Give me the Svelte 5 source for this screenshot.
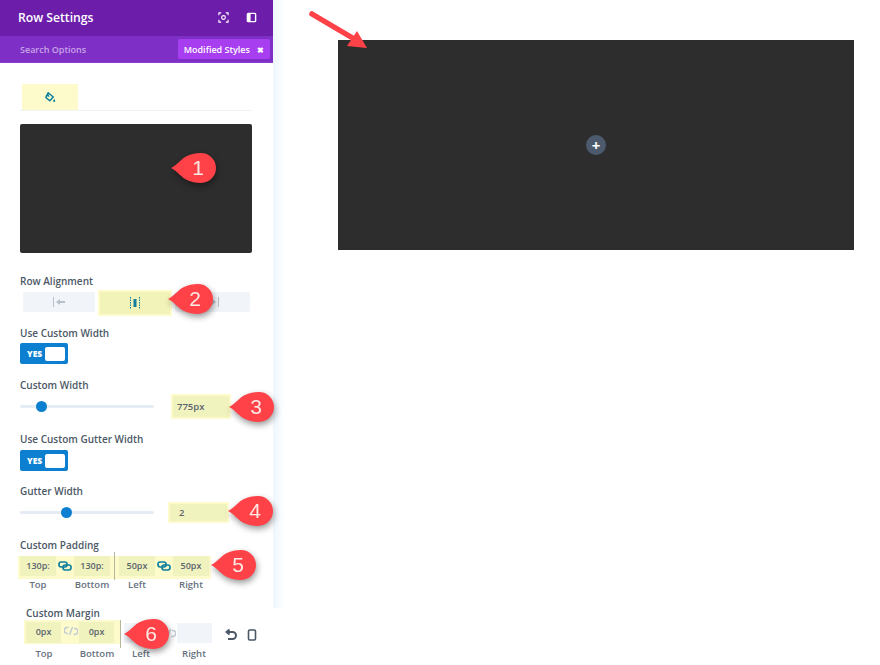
<script>
	const callouts = [
		{ n: 1, x: 171, y: 168 },
		{ n: 2, x: 168, y: 299 },
		{ n: 3, x: 229, y: 407 },
		{ n: 4, x: 228, y: 511 },
		{ n: 5, x: 211, y: 565 },
		{ n: 6, x: 124, y: 634 }
	];
</script>

{#snippet link()}
	<svg class="link" viewBox="0 0 14 10" width="14" height="10" fill="none" stroke="#0f7f9d" stroke-width="1.7">
		<rect x="1" y="1" width="8" height="5" rx="2.2" />
		<rect x="5" y="4" width="8" height="5" rx="2.2" />
	</svg>
{/snippet}

{#snippet broken()}
	<svg class="link" viewBox="0 0 14 10" width="14" height="10" fill="none" stroke="#c3ccd6" stroke-width="1.5">
		<path d="M4.500 1.500H3.200a2.500 2.500 0 0 0 0 6h.8" />
		<path d="M9.500 8.500h1.300a2.500 2.500 0 0 0 0-6H10" />
		<path d="M8.500 1 5.500 9" />
	</svg>
{/snippet}

<div class="page">
	<div class="side">
		<div class="panel">
			<header class="title">
				<h1>Row Settings</h1>
				<svg viewBox="0 0 12 12" width="11" height="11" fill="none" stroke="#fff" stroke-width="1.2">
					<path d="M1 3.500V1h2.500M8.500 1H11v2.500M11 8.500V11H8.500M3.500 11H1V8.500" />
					<circle cx="6" cy="6" r="2" />
				</svg>
				<svg viewBox="0 0 12 12" width="11" height="11" fill="none" stroke="#fff" stroke-width="1.500">
					<rect x="1.500" y="1.500" width="9" height="9" rx="1" />
					<path d="M2 2h3v8H2z" fill="#fff" stroke="none" />
				</svg>
			</header>
			<div class="search">
				<span>Search Options</span>
				<button class="modified">Modified Styles <b>✖</b></button>
			</div>

			<div class="body">
				<div class="tabs">
					<div class="tab">
						<svg viewBox="0 0 12 12" width="11" height="11" fill="#0f7f9d">
							<path d="M3.500 .8 9 5.500 5.200 9.600 1 6 1.800 3.500 3.600 4.200 2.800 2z" fill="none" stroke="#0f7f9d" stroke-width="1.600" />
							<path d="M10 7.500c.8 1 1.200 1.700 1.200 2.300a1.100 1.100 0 0 1-2.300 0c0-.6.400-1.300 1.100-2.300z" />
						</svg>
					</div>
				</div>
				<div class="preview"></div>

				<div class="label first">Row Alignment</div>
				<div class="align">
					<div class="opt left">
						<svg viewBox="0 0 14 10" width="14" height="10" fill="#b5c0cc">
							<path d="M1 0h1v10H1zM4 5l4-3v2h5v2H8v2z" />
						</svg>
					</div>
					<div class="opt on">
						<svg viewBox="0 0 14 12" width="14" height="12">
							<path d="M2.500 0v12M11.500 0v12" stroke="#0f7f9d" stroke-dasharray="1.500 1" fill="none" />
							<rect x="5.500" y="2" width="3" height="8" fill="#0f7f9d" />
						</svg>
					</div>
					<div class="opt">
						<svg viewBox="0 0 14 10" width="14" height="10" fill="#b5c0cc">
							<path d="M12 0h1v10h-1zM10 5 6 2v2H1v2h5v2z" />
						</svg>
					</div>
				</div>

				<div class="label">Use Custom Width</div>
				<div class="toggle"><span>YES</span><i></i></div>

				<div class="label wide first-wide">Custom Width</div>
				<div class="range">
					<div class="track"><i style="left: 12.300%"></i></div>
					<div class="value width">775px</div>
				</div>

				<div class="label wide">Use Custom Gutter Width</div>
				<div class="toggle low"><span>YES</span><i></i></div>

				<div class="label wide">Gutter Width</div>
				<div class="range two">
					<div class="track"><i style="left: 30.600%"></i></div>
					<div class="value">2</div>
				</div>

				<div class="label pad">Custom Padding</div>
				<div class="band">
					<div class="box">130p:</div>
					{@render link()}
					<div class="box">130p:</div>
					<div class="rule"></div>
					<div class="box">50px</div>
					{@render link()}
					<div class="box">50px</div>
				</div>
				<div class="caps">
					<span>Top</span><span>Bottom</span><span class="near">Left</span><span>Right</span>
				</div>
			</div>
		</div>

		<div class="foot">
			<div class="label">Custom Margin</div>
			<div class="margin">
				<div class="band">
					<div class="box">0px</div>
					{@render broken()}
					<div class="box">0px</div>
				</div>
				<div class="rule"></div>
				<div class="box blank"></div>
				{@render broken()}
				<div class="box blank"></div>
				<svg class="undo" viewBox="0 0 12 12" width="12" height="12" fill="none" stroke="#4c5866" stroke-width="2">
					<path d="M3 3h4.500a3.200 3.200 0 0 1 0 7H3" />
					<path d="M4.500 .5 1.500 3l3 2.500" />
				</svg>
				<svg class="phone" viewBox="0 0 10 12" width="10" height="12" fill="none" stroke="#4c5866" stroke-width="1.600">
					<rect x="1.500" y="1" width="7" height="10" rx="1.200" />
				</svg>
			</div>
			<div class="caps">
				<span>Top</span><span>Bottom</span><span class="near">Left</span><span>Right</span>
			</div>
		</div>
	</div>

	<div class="edge"></div>

	<main class="canvas">
		<div class="row"><div class="plus">+</div></div>
	</main>

	<svg class="arrow" viewBox="0 0 70 50" width="70" height="50">
		<path d="M3 3 47 29" stroke="#ff4148" stroke-width="5.500" stroke-linecap="round" />
		<path d="M58 37 38 35 48 20z" fill="#ff4148" />
	</svg>

	{#each callouts as c}
		<div class="callout" style="left: {c.x}px; top: {c.y - 16}px">
			<svg viewBox="0 0 46 32" width="46" height="32">
				<path d="M0 16C6 13 11 6 16 4 20 2 25 1 30 1a15 15 0 0 1 0 30c-5 0-10-1-14-3C11 26 6 19 0 16z" fill="#ff4148" />
			</svg>
			<span>{c.n}</span>
		</div>
	{/each}
</div>

<style>
	:global(body) {
		margin: 0;
		background: #fff;
	}
	.page {
		position: relative;
		display: flex;
		width: 880px;
		height: 665px;
		overflow: hidden;
		font-family: 'Open Sans', sans-serif;
		color: #4c5866;
	}
	.side {
		flex: none;
		width: 273px;
	}
	.panel {
		height: 606px;
	}
	.title {
		display: flex;
		align-items: center;
		gap: 17px;
		height: 36px;
		padding: 0 16px 2px 18px;
		background: #6c1eab;
		box-sizing: border-box;
	}
	h1 {
		flex: 1;
		margin: 0;
		font-size: 12.200px;
		font-weight: 600;
		color: #fff;
	}
	.search {
		display: flex;
		align-items: center;
		justify-content: space-between;
		height: 26px;
		padding: 0 3px 0 20px;
		background: #7e30c6;
		border-bottom: 1px solid #8a3bd0;
		font-size: 9px;
		font-weight: 600;
		color: #c9a3e8;
	}
	.modified {
		width: 92px;
		height: 20px;
		padding: 0;
		border: 0;
		border-radius: 2px;
		background: #a73ef0;
		font: 600 9px 'Open Sans', sans-serif;
		color: #fff;
	}
	.modified b {
		margin-left: 5px;
		font-size: 8px;
	}
	.body {
		padding: 21px 21px 0 20px;
	}
	.tabs {
		height: 26px;
		border-bottom: 1px solid #f0f3f7;
	}
	.tab {
		display: flex;
		align-items: center;
		justify-content: center;
		width: 56px;
		height: 26px;
		margin-left: 2px;
		background: #fdfbcb;
	}
	.preview {
		height: 129px;
		margin-top: 13px;
		border-radius: 2px;
		background: #2d2d2d;
	}
	.label {
		height: 15px;
		font-size: 10px;
		font-weight: 600;
		line-height: 15px;
	}
	.label.first {
		margin-top: 21px;
	}
	.align {
		display: flex;
		align-items: flex-start;
		gap: 3px;
		height: 26px;
		margin: 1px 2px 10px 3px;
	}
	.opt {
		display: flex;
		flex: 1;
		align-items: center;
		justify-content: center;
		height: 20px;
		margin-top: 2px;
		border-radius: 2px;
		background: #f1f4f8;
	}
	.opt.left {
		flex: none;
		width: 72px;
	}
	.opt.on {
		flex: none;
		box-sizing: border-box;
		width: 74px;
		height: 26px;
		margin-top: 0;
		border: 2px solid #fdfbcb;
		border-radius: 0;
		background: #f1f3b8;
	}
	.toggle {
		display: flex;
		align-items: center;
		justify-content: space-between;
		box-sizing: border-box;
		width: 48px;
		height: 21px;
		margin-top: 2px;
		padding: 0 3px 0 7px;
		border-radius: 2px;
		background: #0c7fd1;
		font-size: 8.500px;
		font-weight: 800;
		color: #fff;
	}
	.toggle.low {
		margin-top: 3px;
	}
	.toggle i {
		width: 20px;
		height: 14px;
		border-radius: 2px;
		background: #fff;
	}
	.label.wide {
		margin-top: 13px;
	}
	.label.first-wide {
		margin-top: 14px;
	}
	.range {
		display: flex;
		align-items: center;
		justify-content: space-between;
		height: 25px;
		margin-top: 1px;
	}
	.range.two {
		height: 21px;
		margin-top: 3px;
	}
	.track {
		position: relative;
		width: 134px;
		height: 3px;
		border-radius: 2px;
		background: #e6ecf3;
	}
	.track i {
		position: absolute;
		top: -4px;
		width: 11px;
		height: 11px;
		border-radius: 50%;
		background: #0c7fd1;
	}
	.value {
		box-sizing: border-box;
		width: 61px;
		height: 100%;
		padding-left: 9px;
		margin-right: 23px;
		border: 2px solid #fdfbcb;
		background: #f1f3be;
		font-size: 9.500px;
		font-weight: 600;
		line-height: 17px;
		color: #5c6470;
	}
	.value.width {
		width: 60px;
		margin-right: 21px;
		padding-left: 4px;
		line-height: 21px;
	}
	.label.pad {
		margin-top: 15px;
	}
	.band {
		display: flex;
		align-items: flex-start;
		width: fit-content;
		height: 23px;
		margin: 3px 0 0 -2px;
		padding: 0 2px;
		background: #fdfbcb;
	}
	.box {
		flex: none;
		box-sizing: border-box;
		width: 36px;
		height: 20px;
		background: #f1f3be;
		font-size: 9px;
		font-weight: 600;
		line-height: 20px;
		text-align: center;
		color: #5c6470;
	}
	.link {
		flex: none;
		margin: 5px 2px 0;
	}
	.rule {
		flex: none;
		width: 1px;
		height: 28px;
		margin: -4px 4px 0;
		background: #b5b89a;
	}
	.caps {
		display: flex;
		gap: 18px;
		font-size: 9.500px;
		font-weight: 600;
		line-height: 12px;
		color: #66717e;
	}
	.caps span {
		flex: none;
		width: 36px;
		text-align: center;
	}
	.caps .near {
		margin-left: -9px;
	}
	.foot {
		position: relative;
		box-sizing: border-box;
		height: 59px;
		padding-left: 26px;
		background: #fff;
	}
	.margin {
		display: flex;
		align-items: flex-start;
		height: 28px;
		margin: -1px 0 0 -2px;
	}
	.margin .band {
		box-sizing: border-box;
		width: 96px;
		height: 24px;
		margin: 0;
		padding: 2px 0 0 2px;
	}
	.margin .box {
		width: 35px;
		height: 21px;
	}
	.margin .band .link {
		margin: 4px 1px 0 3px;
	}
	.margin .rule {
		margin: 0 3px 0 0;
	}
	.margin .box.blank {
		height: 20px;
		margin-top: 3px;
		background: #f1f4f8;
	}
	.margin > .link {
		margin: 8px 1px 0 3px;
	}
	.undo {
		flex: none;
		margin: 9px 0 0 13px;
	}
	.phone {
		flex: none;
		margin: 9px 0 0 10px;
	}
	.foot .caps {
		gap: 17px;
	}
	.edge {
		flex: none;
		width: 12px;
		height: 608px;
		background: linear-gradient(90deg, #eef6fd, #fff);
	}
	.canvas {
		flex: 1;
		padding: 40px 0 0 53px;
	}
	.row {
		display: flex;
		align-items: center;
		justify-content: center;
		width: 516px;
		height: 210px;
		background: #2d2d2d;
	}
	.plus {
		width: 20px;
		height: 20px;
		border-radius: 50%;
		background: #4d5a6e;
		font-size: 15px;
		font-weight: 700;
		line-height: 20px;
		text-align: center;
		color: #fff;
	}
	.arrow {
		position: absolute;
		left: 309px;
		top: 11px;
	}
	.callout {
		position: absolute;
		width: 46px;
		height: 32px;
		filter: drop-shadow(1px 3px 3px rgba(0, 0, 0, 0.4));
	}
	.callout svg {
		display: block;
	}
	.callout span {
		position: absolute;
		left: 8px;
		right: 0;
		top: 0;
		font-family: 'Liberation Sans', sans-serif;
		font-size: 21px;
		line-height: 32px;
		text-align: center;
		color: #fde9e4;
	}
</style>
